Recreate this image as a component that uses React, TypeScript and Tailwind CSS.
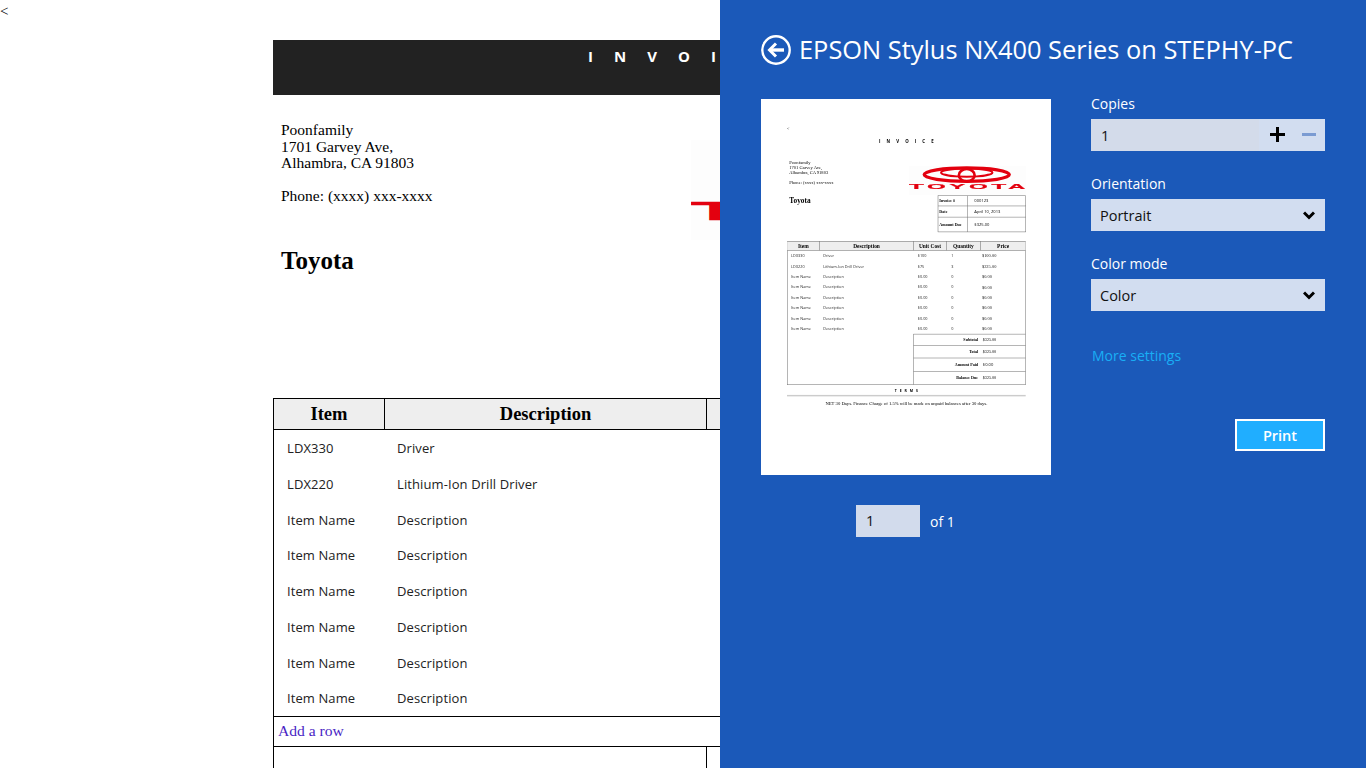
import React from "react";

const serif = "font-['Liberation_Serif',serif]";
const sans = "font-['Open_Sans',sans-serif]";
const cols = "grid grid-cols-[111px_322px_113px_116px_155px]";

const rows = [
  { item: "LDX330", desc: "Driver", cost: "$100", qty: "1", price: "$100.00" },
  { item: "LDX220", desc: "Lithium-Ion Drill Driver", cost: "$75", qty: "3", price: "$225.00" },
  ...Array.from({ length: 6 }, () => ({
    item: "Item Name",
    desc: "Description",
    cost: "$0.00",
    qty: "0",
    price: "$0.00",
  })),
];

const totals = [
  { label: "Subtotal", value: "$325.00", h: "h-[39px]" },
  { label: "Total", value: "$325.00", h: "h-[43px]" },
  { label: "Amount Paid", value: "$0.00", h: "h-[46px]" },
  { label: "Balance Due", value: "$325.00", h: "h-[44px]" },
];

const meta = [
  { label: "Invoice #", value: "000123", h: "h-[35px]" },
  { label: "Date", value: "April 10, 2013", h: "h-[38px]" },
  { label: "Amount Due", value: "$325.00", h: "h-[51px]" },
];

function ToyotaLogo() {
  return (
    <svg width="400" height="100" viewBox="0 0 400 100" className="block bg-[#fdfdfd]">
      <g fill="none" stroke="#e3000f">
        <ellipse cx="198" cy="30" rx="146" ry="23" strokeWidth="11" />
        <ellipse cx="198" cy="23" rx="88" ry="14" strokeWidth="7" />
        <ellipse cx="198" cy="32" rx="27" ry="21" strokeWidth="9" />
      </g>
      <text
        x="0"
        y="80"
        transform="scale(3.3 1)"
        textLength="121"
        lengthAdjust="spacing"
        fill="#e3000f"
        stroke="#e3000f"
        strokeWidth="0.6"
        fontFamily="Liberation Sans"
        fontWeight="700"
        fontSize="25"
      >
        TOYOTA
      </text>
    </svg>
  );
}

function Invoice({ preview = false }: { preview?: boolean }) {
  return (
    <div className={`${serif} text-black`}>
      <div className="h-10 text-[15px] leading-[23px]">&lt;</div>
      <div className={`w-[818px] ${preview ? "" : "ml-[273px]"}`}>
        <div
          className={`h-[55px] text-center pl-[21px] ${sans} font-bold text-[15px] tracking-[21px] leading-[32px] ${
            preview ? "bg-white text-black" : "bg-[#222222] text-white"
          }`}
        >
          INVOICE
        </div>

        <div className="h-[303px] flex justify-between">
          <div className="pl-2 pt-[27px]">
            <div className="text-[15.5px] leading-[16.5px]">
              <p>Poonfamily</p>
              <p>1701 Garvey Ave,</p>
              <p>Alhambra, CA 91803</p>
              <p className="mt-[16.5px]">Phone: (xxxx) xxx-xxxx</p>
            </div>
            <h1 className="mt-[41px] text-[25px] leading-[30px] font-bold">Toyota</h1>
          </div>
          <div className="pt-[45px]">
            <ToyotaLogo />
            <div className="ml-[99px] mt-[2px] w-[301px] border-t border-l border-black">
              {meta.map((m) => (
                <div key={m.label} className={`${m.h} flex items-center border-b border-r border-black`}>
                  <div className="w-[100px] h-full flex items-center pl-1 border-r border-black font-bold text-sm">
                    {m.label}
                  </div>
                  <div className={`pl-6 text-sm ${sans}`}>{m.value}</div>
                </div>
              ))}
            </div>
          </div>
        </div>

        <div className="border-l border-r border-b border-black">
          <div className={`${cols} h-[32px] bg-[#eeeeee] border-t border-b border-black font-bold text-[18.5px] leading-[30px] text-center`}>
            <div className="border-r border-black">Item</div>
            <div className="border-r border-black">Description</div>
            <div className="border-r border-black">Unit Cost</div>
            <div className="border-r border-black">Quantity</div>
            <div>Price</div>
          </div>

          {rows.map((r, i) => (
            <div key={i} className={`${cols} h-[35.75px] items-center pt-[2px] ${sans} text-[13px] tracking-[0.1px] text-[#222222]`}>
              <div className="pl-[13px]">{r.item}</div>
              <div className="pl-3">{r.desc}</div>
              <div className="pl-[14px]">{r.cost}</div>
              <div className="pl-4">{r.qty}</div>
              <div className={`pl-[5px] ${serif} text-[15px]`}>{r.price}</div>
            </div>
          ))}

          {!preview && (
            <div className="h-[31px] border-t border-b border-black pl-[4px] text-[#4a1fc4] text-[15.6px] leading-[28px]">
              Add a row
            </div>
          )}

          <div className="flex">
            <div className="w-[433px] border-r border-black" />
            <div className={`flex-1 ${preview ? "border-t border-black" : ""}`}>
              {totals.map((t, i) => (
                <div
                  key={t.label}
                  className={`${t.h} flex items-center ${i < totals.length - 1 ? "border-b border-black" : ""}`}
                >
                  <div className="w-[229px] pr-[8px] text-right font-bold text-sm">{t.label}</div>
                  <div className={`pl-[8px] text-sm ${i === 2 ? sans : ""}`}>{t.value}</div>
                </div>
              ))}
            </div>
          </div>
        </div>

        <div className={`mt-[13px] text-center pl-[10px] ${sans} font-bold text-xs tracking-[10px] leading-[18px]`}>TERMS</div>
        <div className="h-[5px] mt-[4px] bg-[#cccccc]" />
        <p className="mt-[14px] text-center text-base">
          NET 30 Days. Finance Charge of 1.5% will be made on unpaid balances after 30 days.
        </p>
      </div>
    </div>
  );
}

function Chevron() {
  return (
    <svg width="12" height="9" viewBox="0 0 12 9" fill="none" stroke="black" strokeWidth="3">
      <path d="M1 1.5 L6 6.5 L11 1.5" />
    </svg>
  );
}

function Label({ children }: { children: React.ReactNode }) {
  return <div className="h-[25px] text-[14px] leading-[20px] text-white">{children}</div>;
}

function SelectBox({ value }: { value: string }) {
  return (
    <div className="h-8 bg-[#d2ddf0] flex items-center justify-between pl-[9px] pr-[10px] text-[14.5px] text-[#111111]">
      <span className="pt-[2px]">{value}</span>
      <Chevron />
    </div>
  );
}

function PrintPanel() {
  return (
    <aside className={`absolute top-0 left-[720px] w-[646px] h-[768px] bg-[#1b59b9] ${sans} px-[41px] pt-[34px]`}>
      <header className="flex items-center gap-2 h-[32px]">
        <svg width="30" height="30" viewBox="0 0 30 30" fill="none" stroke="white">
          <circle cx="15" cy="15" r="13.7" strokeWidth="2.4" />
          <path d="M23 15 H9" strokeWidth="3.4" />
          <path d="M15 8.5 L8.5 15 L15 21.5" strokeWidth="3" />
        </svg>
        <h2 className="text-[25.4px] leading-[30px] pb-[2px] text-white whitespace-nowrap">
          EPSON Stylus NX400 Series on STEPHY-PC
        </h2>
      </header>

      <div className="flex gap-10 mt-[33px]">
        <div>
          <div className="w-[290px] h-[376px] bg-white overflow-hidden pl-[26px] pt-[26px]">
            <div className="w-[818px] origin-top-left scale-[0.2918] blur-[2px]">
              <Invoice preview />
            </div>
          </div>
          <div className="flex items-center gap-[10px] mt-[30px] ml-[95px]">
            <div className="w-16 h-8 bg-[#d2dbec] pl-[10px] text-[14.5px] leading-8 text-[#111111]">1</div>
            <span className="text-[14px] text-white">of 1</span>
          </div>
        </div>

        <div className="w-[234px] -mt-[5px]">
          <Label>Copies</Label>
          <div className="h-8 flex items-center bg-[#d2ddf0]">
            <div className="w-[168px] h-full bg-[#d3dbea] pl-[10px] text-[14.5px] leading-[34px] text-[#111111]">1</div>
            <svg width="66" height="32" viewBox="0 0 66 32" stroke="black" fill="none">
              <path d="M11 15.5 H26 M18.5 8 V23" strokeWidth="3" />
              <path d="M43 15.5 H57" stroke="#7b9bd2" strokeWidth="3" />
            </svg>
          </div>
          <div className="mt-[23px]">
            <Label>Orientation</Label>
            <SelectBox value="Portrait" />
          </div>
          <div className="mt-[23px]">
            <Label>Color mode</Label>
            <SelectBox value="Color" />
          </div>
          <div className="mt-[35px] pl-px text-[14px] leading-5 text-[#19aef5]">More settings</div>
          <div className="flex justify-end mt-[53px]">
            <div className="w-[90px] h-8 bg-[#20aeff] border-2 border-white text-center text-[14.5px] font-semibold leading-[30px] text-white">
              Print
            </div>
          </div>
        </div>
      </div>
    </aside>
  );
}

export default function App() {
  return (
    <div className="relative w-[1366px] h-[768px] overflow-hidden bg-white">
      <Invoice />
      <PrintPanel />
    </div>
  );
}
